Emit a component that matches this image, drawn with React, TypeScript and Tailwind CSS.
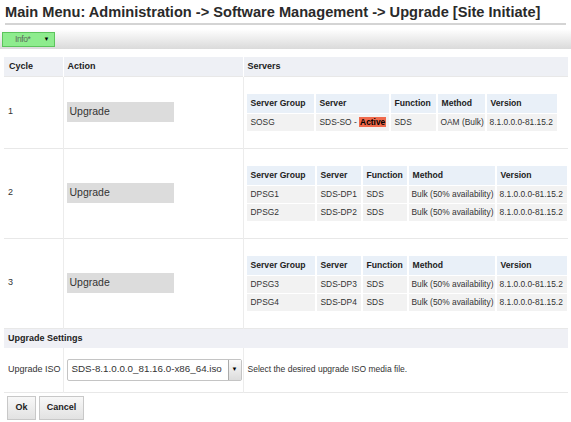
export default function App() {
    const groups = [
        {
            cycle: "1",
            height: "h-[72px]",
            tableWidth: "w-[314px]",
            widths: ["w-[67px]", "w-[73px]", "w-[45px]", "w-[47px]", "w-[70px]"],
            rows: [
                { group: "SOSG", server: "SDS-SO", active: true, fn: "SDS", method: "OAM (Bulk)", version: "8.1.0.0.0-81.15.2" },
            ],
        },
        {
            cycle: "2",
            height: "h-[90px]",
            tableWidth: "w-[324px]",
            widths: ["w-[68px]", "w-[44px]", "w-[44px]", "w-[86px]", "w-[70px]"],
            rows: [
                { group: "DPSG1", server: "SDS-DP1", active: false, fn: "SDS", method: "Bulk (50% availability)", version: "8.1.0.0.0-81.15.2" },
                { group: "DPSG2", server: "SDS-DP2", active: false, fn: "SDS", method: "Bulk (50% availability)", version: "8.1.0.0.0-81.15.2" },
            ],
        },
        {
            cycle: "3",
            height: "h-[90px]",
            tableWidth: "w-[324px]",
            widths: ["w-[68px]", "w-[44px]", "w-[44px]", "w-[86px]", "w-[70px]"],
            rows: [
                { group: "DPSG3", server: "SDS-DP3", active: false, fn: "SDS", method: "Bulk (50% availability)", version: "8.1.0.0.0-81.15.2" },
                { group: "DPSG4", server: "SDS-DP4", active: false, fn: "SDS", method: "Bulk (50% availability)", version: "8.1.0.0.0-81.15.2" },
            ],
        },
    ];
    const headers = ["Server Group", "Server", "Function", "Method", "Version"];

    return (
        <div className="w-[571px] h-[422px] overflow-hidden bg-white text-[#333] font-['Liberation_Sans',Arial,sans-serif]">
            <div className="px-[5px] pt-[4px] h-[23px] text-[14.6px] leading-[17px] font-bold text-[#2a2a2a] whitespace-nowrap">
                Main Menu: Administration -&gt; Software Management -&gt; Upgrade [Site Initiate]
            </div>
            <div className="mx-[5px] h-[2px] bg-[#d4d4d4]" />
            <div className="mt-[4px] h-[20px] flex items-center pl-[2px] bg-gradient-to-b from-white to-[#dadada]">
                <div className="w-[53px] h-[15px] flex items-center bg-[#8eec8e] border border-[#5cc45c]">
                    <span className="ml-[12px] text-[8.5px] text-[#5b6b5b] tracking-[-0.4px]">Info*</span>
                    <span className="ml-[13px] text-[6px] text-black">▼</span>
                </div>
            </div>

            <table className="mt-[8px] ml-[4px] w-[564px] table-fixed border-collapse">
                <colgroup>
                    <col className="w-[59px]" />
                    <col className="w-[180px]" />
                    <col className="w-[325px]" />
                </colgroup>
                <thead>
                    <tr className="h-[19px] bg-[#eef0f5] text-[9px] font-bold text-[#222]">
                        <th className="text-left px-[5px] border-r border-white">Cycle</th>
                        <th className="text-left px-[4px] border-r border-white">Action</th>
                        <th className="text-left px-[4px]">Servers</th>
                    </tr>
                </thead>
                <tbody>
                    {groups.map((g) => (
                        <tr key={g.cycle} className={`${g.height} border-t border-[#e8e8e8]`}>
                            <td className="px-[4px] text-[9px] align-middle border-r border-[#ececec]">{g.cycle}</td>
                            <td className="pl-[3px] align-middle border-r border-[#ececec]">
                                <div className="w-[107px] h-[20px] flex items-center pl-[3px] bg-[#dcdcdc] text-[10.5px] text-[#333]">
                                    Upgrade
                                </div>
                            </td>
                            <td className="pl-[1px] align-middle">
                                <table className={`${g.tableWidth} table-fixed border-separate border-spacing-x-[2px] border-spacing-y-[1px] text-[8.4px] whitespace-nowrap`}>
                                    <thead>
                                        <tr className="h-[19px]">
                                            {headers.map((h, i) => (
                                                <th key={h} className={`${g.widths[i]} text-left pl-[4px] pr-0 font-bold text-[8.6px] text-[#222] bg-[#e9f0f8]`}>
                                                    {h}
                                                </th>
                                            ))}
                                        </tr>
                                    </thead>
                                    <tbody>
                                        {g.rows.map((r) => (
                                            <tr key={r.group} className="h-[17px] bg-[#f2f2f2]">
                                                <td className="pl-[4px] pr-0">{r.group}</td>
                                                <td className="pl-[4px] pr-0">
                                                    {r.server}
                                                    {r.active && (
                                                        <>
                                                            {" - "}
                                                            <span className="bg-[#ef6a4c] text-black font-bold px-[1px]">Active</span>
                                                        </>
                                                    )}
                                                </td>
                                                <td className="pl-[4px] pr-0">{r.fn}</td>
                                                <td className="pl-[3px] pr-0">{r.method}</td>
                                                <td className="pl-[3px] pr-0">{r.version}</td>
                                            </tr>
                                        ))}
                                    </tbody>
                                </table>
                            </td>
                        </tr>
                    ))}
                    <tr className="h-[20px] border-t border-[#e8e8e8] bg-[#eff0f5]">
                        <td colSpan={3} className="px-[4px] text-[9px] font-bold text-[#222]">Upgrade Settings</td>
                    </tr>
                    <tr className="h-[44px] border-b border-[#e8e8e8]">
                        <td className="px-[4px] text-[9px] border-r border-[#ececec] whitespace-nowrap">Upgrade ISO</td>
                        <td className="pl-[3px] border-r border-[#ececec]">
                            <div className="w-[175px] h-[22px] flex items-center border border-[#c4c4c4] bg-white rounded-[2px]">
                                <span className="flex-1 pl-[4px] text-[9.8px] text-[#333] whitespace-nowrap overflow-hidden">
                                    SDS-8.1.0.0.0_81.16.0-x86_64.iso
                                </span>
                                <span className="w-[13px] h-[20px] flex items-center justify-center border-l border-[#aaa] bg-gradient-to-b from-[#fafafa] to-[#dcdcdc] text-[6px] text-black">
                                    ▼
                                </span>
                            </div>
                        </td>
                        <td className="px-[4px] text-[8.5px] whitespace-nowrap">Select the desired upgrade ISO media file.</td>
                    </tr>
                </tbody>
            </table>

            <div className="mt-[3px] ml-[7px] flex gap-[3px]">
                <button className="w-[29px] h-[24px] border border-[#c8c8c8] bg-gradient-to-b from-[#f8f8f8] to-[#e2e2e2] text-[9px] font-bold text-[#222]">
                    Ok
                </button>
                <button className="w-[45px] h-[24px] border border-[#c8c8c8] bg-gradient-to-b from-[#f8f8f8] to-[#e2e2e2] text-[9px] font-bold text-[#222]">
                    Cancel
                </button>
            </div>
        </div>
    );
}
